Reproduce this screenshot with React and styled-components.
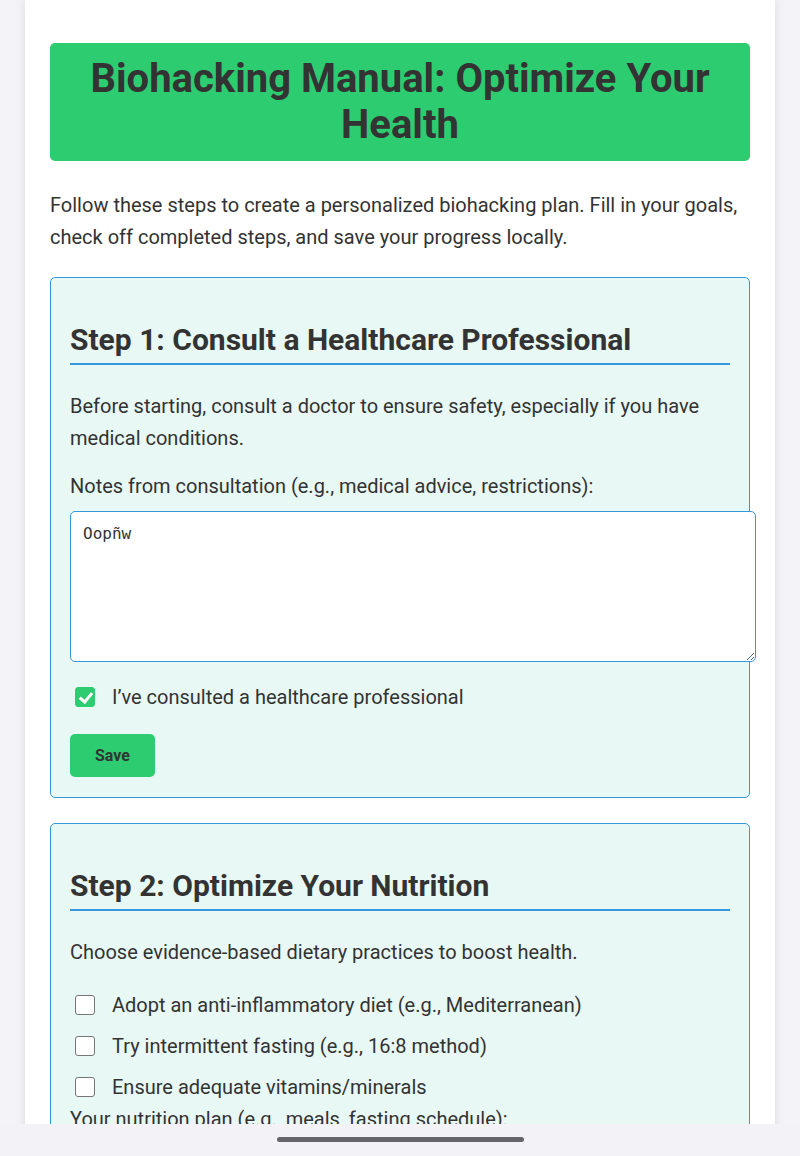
import React, { useState } from "react";
import styled, { createGlobalStyle } from "styled-components";

const GlobalStyle = createGlobalStyle`
  html, body {
    margin: 0;
    padding: 0;
    background: #f4f4f8;
  }
  * {
    box-sizing: border-box;
  }
`;

const Screen = styled.div`
  height: 1156px;
  display: flex;
  flex-direction: column;
  font-family: Roboto, "Noto Sans", sans-serif;
  color: #333;
  background: #f4f4f8;
`;

const Viewport = styled.div`
  flex: 1;
  overflow: hidden;
`;

const Container = styled.div`
  width: 750px;
  margin: 0 auto;
  padding: 43px 25px 25px;
  background: #fff;
  box-shadow: 0 0 10px rgba(0, 0, 0, 0.1);
  min-height: 100%;
`;

const Header = styled.h1`
  margin: 0 0 28px;
  padding: 13px 20px;
  background: #2ecc71;
  border-radius: 5px;
  text-align: center;
  font-size: 40px;
  line-height: 46px;
  font-weight: 700;
  color: #333;
`;

const Intro = styled.p`
  margin: 0 0 24px;
  font-size: 20px;
  line-height: 32px;
`;

const Card = styled.section`
  background: #e8f8f5;
  border: 1px solid #3498db;
  border-radius: 5px;
  padding: 20px 19px 20px;
  margin-bottom: 25px;
`;

const StepTitle = styled.h2`
  margin: 25px 0 25px;
  padding-bottom: 7px;
  border-bottom: 2px solid #3498db;
  font-size: 30px;
  line-height: 33px;
  font-weight: 700;
  color: #333;
`;

const Text = styled.p`
  margin: 0 0 16px;
  font-size: 20px;
  line-height: 32px;
`;

const FieldLabel = styled.label`
  display: block;
  margin-bottom: 9px;
  font-size: 20px;
  line-height: 32px;
`;

const Notes = styled.textarea`
  display: block;
  box-sizing: content-box;
  width: 100%;
  height: 125px;
  margin: 0 0 19px;
  padding: 13px 12px 11px;
  border: 1px solid #3498db;
  border-radius: 5px;
  background: #fff;
  font-family: "DejaVu Sans Mono", "Liberation Mono", monospace;
  font-size: 16px;
  line-height: 18px;
  color: #333;
  resize: vertical;
  outline: none;
`;

const CheckList = styled.div`
  display: flex;
  flex-direction: column;
  gap: 9px;
  margin-top: ${({ $top }) => $top || 0}px;
`;

const CheckRow = styled.label`
  display: flex;
  align-items: center;
  height: 32px;
  font-size: 20px;
  line-height: 32px;
  cursor: pointer;
`;

const Box = styled.input`
  appearance: none;
  position: relative;
  width: 20px;
  height: 20px;
  margin: 0 17px 0 5px;
  flex-shrink: 0;
  border: 1.5px solid #767676;
  border-radius: 3px;
  background: #fff;
  cursor: pointer;

  &:checked {
    background: #2ecc71;
    border-color: #2ecc71;
  }

  &:checked::after {
    content: "";
    position: absolute;
    left: 5.5px;
    top: 1.5px;
    width: 5px;
    height: 10px;
    border: solid #fff;
    border-width: 0 3px 3px 0;
    transform: rotate(40deg);
  }
`;

const SaveButton = styled.button`
  margin-top: 21px;
  padding: 12px 25px;
  border: none;
  border-radius: 5px;
  background: #2ecc71;
  font-family: Roboto, sans-serif;
  font-size: 16px;
  line-height: 19px;
  font-weight: 700;
  color: #333;
  cursor: pointer;
`;

const NavBar = styled.div`
  height: 32px;
  flex-shrink: 0;
  display: flex;
  justify-content: center;
  padding-top: 13px;
  background: #f3f3f7;
`;

const Pill = styled.div`
  width: 247px;
  height: 5px;
  border-radius: 3px;
  background: #66656b;
`;

const nutrition = [
  "Adopt an anti-inflammatory diet (e.g., Mediterranean)",
  "Try intermittent fasting (e.g., 16:8 method)",
  "Ensure adequate vitamins/minerals",
];

const App = () => {
  const [notes, setNotes] = useState("Oopñw");
  const [consulted, setConsulted] = useState(true);
  const [checks, setChecks] = useState([false, false, false]);

  return (
    <Screen>
      <GlobalStyle />
      <Viewport>
        <Container>
          <Header>Biohacking Manual: Optimize Your Health</Header>
          <Intro>
            Follow these steps to create a personalized biohacking plan. Fill in
            your goals, check off completed steps, and save your progress locally.
          </Intro>

          <Card>
            <StepTitle>Step 1: Consult a Healthcare Professional</StepTitle>
            <Text>
              Before starting, consult a doctor to ensure safety, especially if you
              have medical conditions.
            </Text>
            <FieldLabel htmlFor="notes1">
              Notes from consultation (e.g., medical advice, restrictions):
            </FieldLabel>
            <Notes
              id="notes1"
              value={notes}
              onChange={(e) => setNotes(e.target.value)}
            />
            <CheckList>
              <CheckRow>
                <Box
                  type="checkbox"
                  checked={consulted}
                  onChange={() => setConsulted(!consulted)}
                />
                I’ve consulted a healthcare professional
              </CheckRow>
            </CheckList>
            <SaveButton>Save</SaveButton>
          </Card>

          <Card>
            <StepTitle>Step 2: Optimize Your Nutrition</StepTitle>
            <Text>Choose evidence-based dietary practices to boost health.</Text>
            <CheckList $top={21}>
              {nutrition.map((item, i) => (
                <CheckRow key={item}>
                  <Box
                    type="checkbox"
                    checked={checks[i]}
                    onChange={() =>
                      setChecks(checks.map((c, j) => (j === i ? !c : c)))
                    }
                  />
                  {item}
                </CheckRow>
              ))}
            </CheckList>
            <FieldLabel>Your nutrition plan (e.g., meals, fasting schedule):</FieldLabel>
            <Notes />
          </Card>
        </Container>
      </Viewport>
      <NavBar>
        <Pill />
      </NavBar>
    </Screen>
  );
};

export default App;
